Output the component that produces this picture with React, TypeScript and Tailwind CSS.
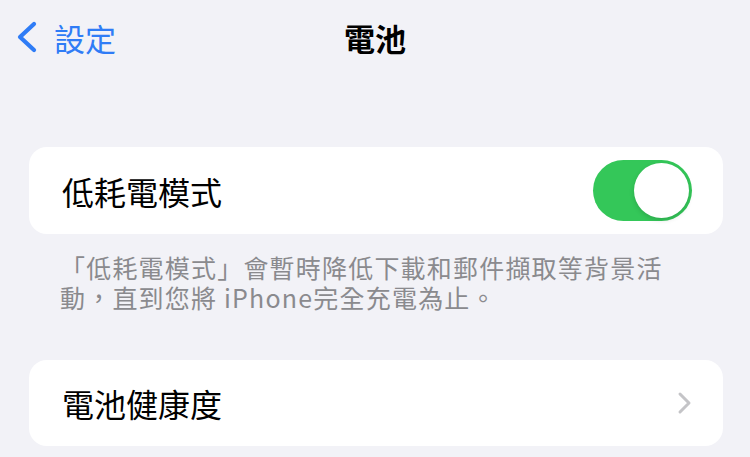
import React, { useState } from "react";

const font = { fontFamily: '"Noto Sans CJK TC", "Noto Sans", sans-serif' };

const Toggle: React.FC<{ on: boolean; onChange: () => void }> = ({ on, onChange }) => (
  <button
    type="button"
    onClick={onChange}
    className={`relative flex h-[61px] w-[99px] items-center rounded-full p-[3px] ${
      on ? "justify-end bg-[#34c759]" : "justify-start bg-[#e9e9eb]"
    }`}
  >
    <span className="block h-[55px] w-[55px] rounded-full bg-white shadow-[0_2px_5px_rgba(0,0,0,0.15)]" />
  </button>
);

const App: React.FC = () => {
  const [lowPower, setLowPower] = useState(true);

  return (
    <div className="h-[457px] w-[750px] overflow-hidden bg-[#f2f2f7]" style={font}>
      {/* Nav bar */}
      <div className="grid h-[74px] grid-cols-[1fr_auto_1fr] items-center">
        <div className="flex items-center gap-[14px] pl-[14px]">
          <svg width="26" height="32" viewBox="0 0 26 32" fill="none">
            <path
              d="M20 3 L6 16 L20 29"
              stroke="#2f7cf6"
              strokeWidth="4.2"
              strokeLinecap="round"
              strokeLinejoin="round"
            />
          </svg>
          <span className="text-[31px] leading-none text-[#2f7cf6]">設定</span>
        </div>
        <h1 className="text-[31px] font-bold leading-none text-black">電池</h1>
        <div />
      </div>

      {/* Low power mode */}
      <div className="ml-[29px] mr-[27px] mt-[73px] flex h-[87px] items-center justify-between rounded-[18px] bg-white pl-[33px] pr-[31px]">
        <span className="text-[32px] leading-none text-black">低耗電模式</span>
        <Toggle on={lowPower} onChange={() => setLowPower(!lowPower)} />
      </div>

      <div className="ml-[60px] mt-[18px] text-[25px] leading-[30px] tracking-[1.2px] text-[#8a8a8e]">
        <p>「低耗電模式」會暫時降低下載和郵件擷取等背景活</p>
        <p>動，直到您將 iPhone完全充電為止。</p>
      </div>

      {/* Battery health */}
      <div className="ml-[29px] mr-[27px] mt-[48px] flex h-[86px] items-center justify-between rounded-[18px] bg-white pl-[33px] pr-[31px]">
        <span className="text-[32px] leading-none text-black">電池健康度</span>
        <svg width="15" height="24" viewBox="0 0 15 24" fill="none">
          <path
            d="M3 3 L12 12 L3 21"
            stroke="#c4c4c7"
            strokeWidth="3"
            strokeLinecap="round"
            strokeLinejoin="round"
          />
        </svg>
      </div>
    </div>
  );
};

export default App;
